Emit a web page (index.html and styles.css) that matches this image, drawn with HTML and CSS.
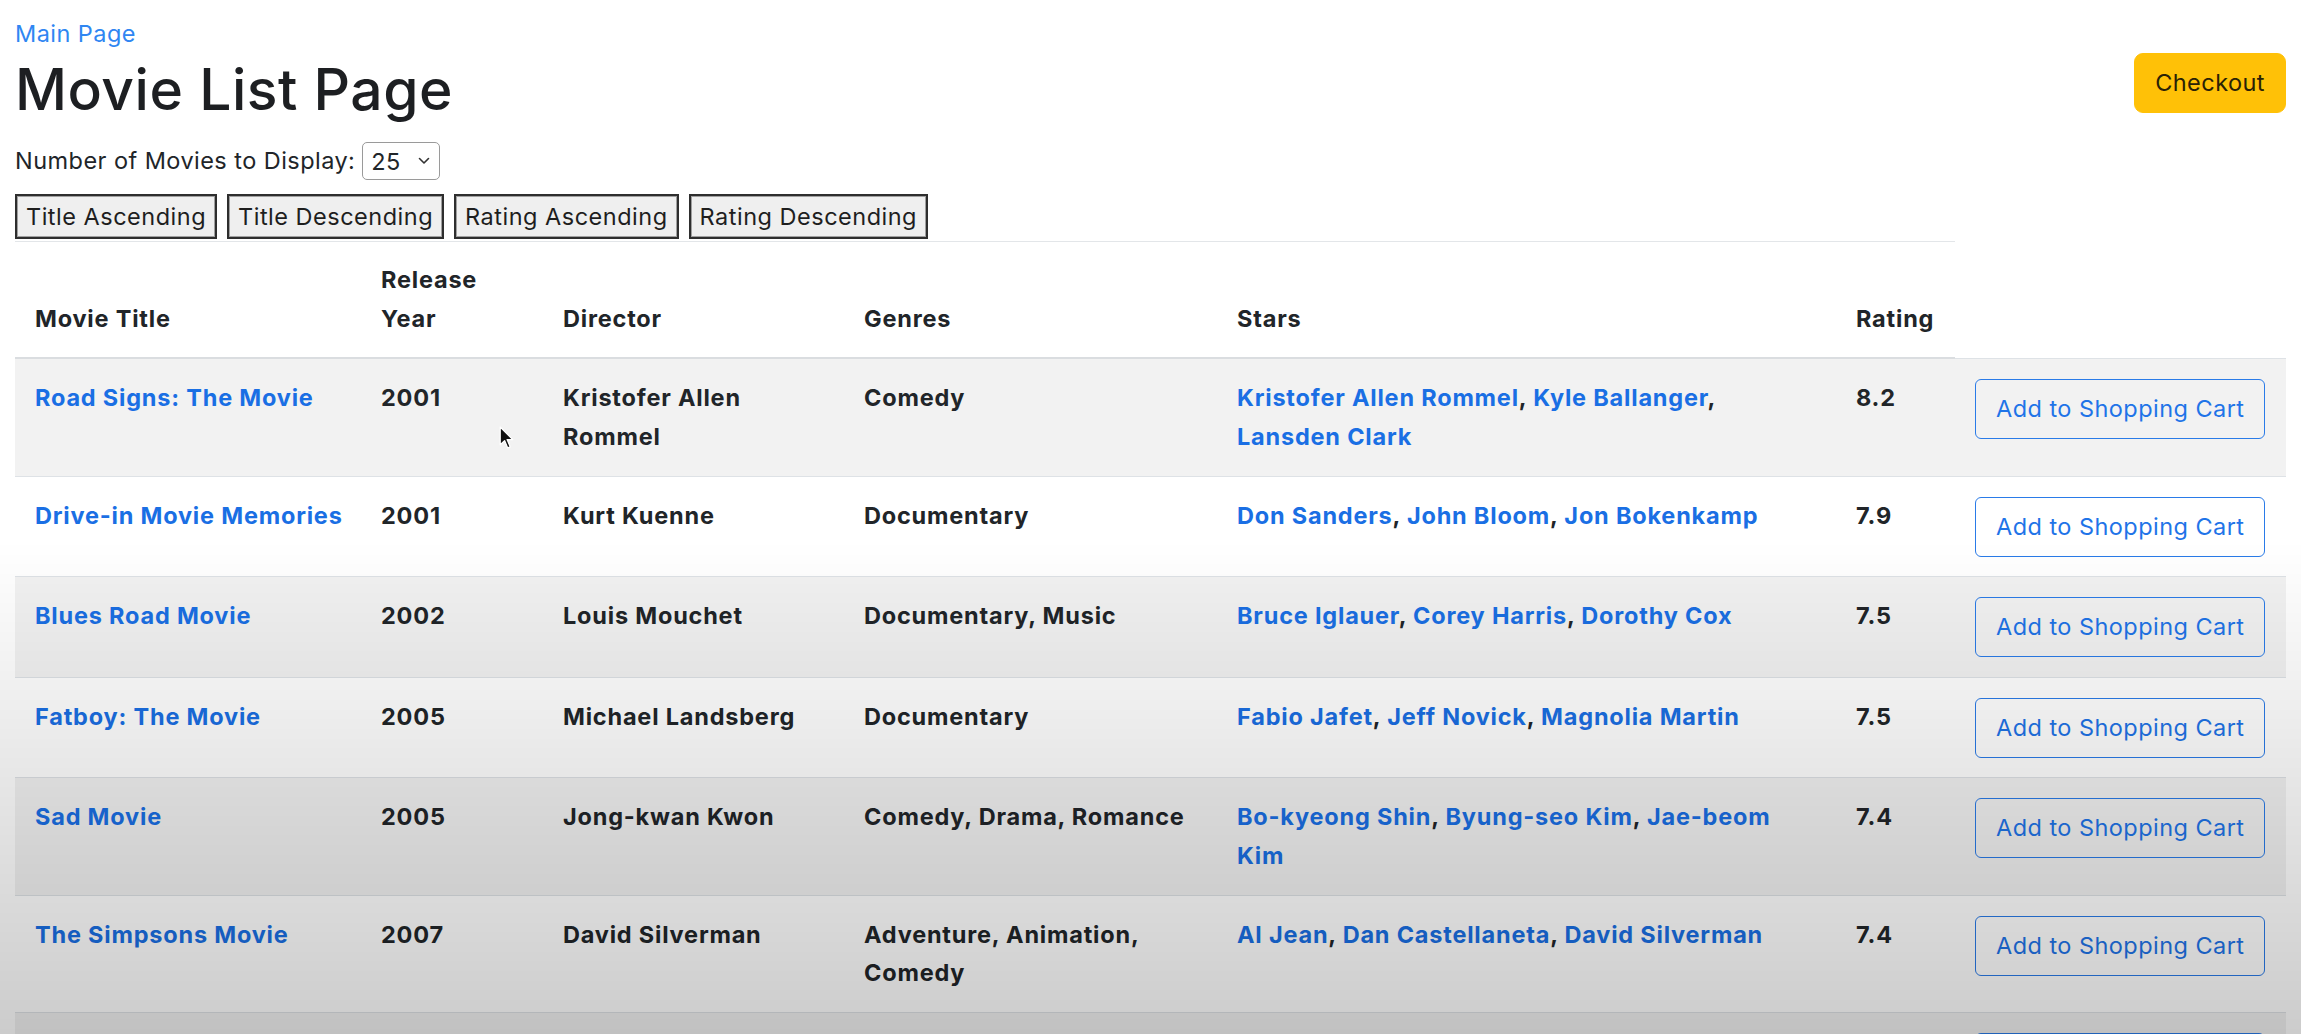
FILE: index.html
```html
<!DOCTYPE html>
<html lang="en">
<head>
<meta charset="utf-8">
<title>Movie List Page</title>
<link rel="stylesheet" href="styles.css">
</head>
<body>
<div class="page">
  <header class="top">
    <div class="top-left">
      <a class="main-link" href="#">Main Page</a>
      <h1 class="title">Movie List Page</h1>
      <div class="display-row">
        <label class="display-label" for="count">Number of Movies to Display:</label>
        <span class="select-wrap">
          <select id="count" class="count-select">
            <option>10</option>
            <option selected>25</option>
            <option>50</option>
            <option>100</option>
          </select>
          <svg class="select-chevron" width="12" height="8" viewBox="0 0 12 8"><path d="M1.5 1.5 L6 6 L10.5 1.5" fill="none" stroke="#333" stroke-width="1.6" stroke-linecap="round" stroke-linejoin="round"/></svg>
        </span>
      </div>
      <div class="sort-row">
        <button class="sort-btn">Title Ascending</button>
        <button class="sort-btn">Title Descending</button>
        <button class="sort-btn">Rating Ascending</button>
        <button class="sort-btn">Rating Descending</button>
      </div>
    </div>
    <button class="checkout-btn">Checkout</button>
  </header>

  <table class="movies">
    <colgroup>
      <col class="c-title"><col class="c-year"><col class="c-dir"><col class="c-genre"><col class="c-stars"><col class="c-rating"><col class="c-cart">
    </colgroup>
    <thead>
      <tr>
        <th>Movie Title</th>
        <th>Release Year</th>
        <th>Director</th>
        <th>Genres</th>
        <th>Stars</th>
        <th>Rating</th>
      </tr>
    </thead>
    <tbody>
      <tr>
        <td><a href="#">Road Signs: The Movie</a></td>
        <td>2001</td>
        <td>Kristofer Allen Rommel</td>
        <td>Comedy</td>
        <td><a href="#">Kristofer Allen Rommel</a>, <a href="#">Kyle Ballanger</a>, <a href="#">Lansden Clark</a></td>
        <td>8.2</td>
        <td><button class="cart-btn">Add to Shopping Cart</button></td>
      </tr>
      <tr>
        <td><a href="#">Drive-in Movie Memories</a></td>
        <td>2001</td>
        <td>Kurt Kuenne</td>
        <td>Documentary</td>
        <td><a href="#">Don Sanders</a>, <a href="#">John Bloom</a>, <a href="#">Jon Bokenkamp</a></td>
        <td>7.9</td>
        <td><button class="cart-btn">Add to Shopping Cart</button></td>
      </tr>
      <tr>
        <td><a href="#">Blues Road Movie</a></td>
        <td>2002</td>
        <td>Louis Mouchet</td>
        <td>Documentary, Music</td>
        <td><a href="#">Bruce Iglauer</a>, <a href="#">Corey Harris</a>, <a href="#">Dorothy Cox</a></td>
        <td>7.5</td>
        <td><button class="cart-btn">Add to Shopping Cart</button></td>
      </tr>
      <tr>
        <td><a href="#">Fatboy: The Movie</a></td>
        <td>2005</td>
        <td>Michael Landsberg</td>
        <td>Documentary</td>
        <td><a href="#">Fabio Jafet</a>, <a href="#">Jeff Novick</a>, <a href="#">Magnolia Martin</a></td>
        <td>7.5</td>
        <td><button class="cart-btn">Add to Shopping Cart</button></td>
      </tr>
      <tr>
        <td><a href="#">Sad Movie</a></td>
        <td>2005</td>
        <td>Jong-kwan Kwon</td>
        <td>Comedy, Drama, Romance</td>
        <td><a href="#">Bo-kyeong Shin</a>, <a href="#">Byung-seo Kim</a>, <a href="#">Jae-beom Kim</a></td>
        <td>7.4</td>
        <td><button class="cart-btn">Add to Shopping Cart</button></td>
      </tr>
      <tr>
        <td><a href="#">The Simpsons Movie</a></td>
        <td>2007</td>
        <td>David Silverman</td>
        <td>Adventure, Animation, Comedy</td>
        <td><a href="#">Al Jean</a>, <a href="#">Dan Castellaneta</a>, <a href="#">David Silverman</a></td>
        <td>7.4</td>
        <td><button class="cart-btn">Add to Shopping Cart</button></td>
      </tr>
      <tr>
        <td><a href="#">Bee Movie</a></td>
        <td>2007</td>
        <td>Simon J. Smith</td>
        <td>Comedy</td>
        <td><a href="#">Jerry Seinfeld</a></td>
        <td>6.1</td>
        <td><button class="cart-btn">Add to Shopping Cart</button></td>
      </tr>
    </tbody>
  </table>
</div>

<svg class="cursor" width="17" height="25" viewBox="0 0 16 24"><path d="M1 1 L1 18 L5.2 14 L8.2 21 L10.6 20 L7.6 13 L13 13 Z" fill="#111" stroke="#fff" stroke-width="1.2" stroke-linejoin="round"/></svg>
<div class="vignette"></div>
</body>
</html>
```

FILE: styles.css
```css
html, body {
  margin: 0;
  padding: 0;
  overflow: hidden;
  background: #fff;
}

body {
  font-family: "Inter", "Noto Sans", "Liberation Sans", sans-serif;
  font-size: 23.5px;
  line-height: 35px;
  letter-spacing: 0.45px;
  color: #212529;
  position: relative;
  min-height: 1034px;
}

.page {
  padding: 16px 15px 0 15px;
}

.top {
  display: flex;
  justify-content: space-between;
  align-items: flex-start;
}

.top-left {
  display: flex;
  flex-direction: column;
  align-items: flex-start;
}

.main-link {
  color: #2f86f2;
  text-decoration: none;
  line-height: 35px;
}

.title {
  margin: 5px 0 18px 0;
  font-size: 57px;
  line-height: 68px;
  font-weight: 500;
  letter-spacing: 0.5px;
  color: #1d1f22;
}

.display-row {
  display: flex;
  align-items: center;
  gap: 7px;
  height: 38px;
}

.display-label {
  line-height: 38px;
}

.select-wrap {
  position: relative;
  display: inline-block;
}

.count-select {
  appearance: none;
  -webkit-appearance: none;
  width: 78px;
  height: 38px;
  padding: 0 0 0 8px;
  border: 1px solid #9a9a9a;
  border-radius: 5px;
  background: #fff;
  font-family: inherit;
  font-size: 23.5px;
  letter-spacing: 0.45px;
  color: #212529;
  display: block;
}

.select-chevron {
  position: absolute;
  right: 10px;
  top: 15px;
  pointer-events: none;
}

.sort-row {
  display: flex;
  gap: 10px;
  margin-top: 14px;
}

.sort-btn {
  font-family: inherit;
  font-size: 23.5px;
  letter-spacing: 0.5px;
  line-height: 37px;
  padding: 2px 9px;
  background: #efefef;
  color: #1e1e1e;
  border: 2px solid #2e2e2e;
  box-shadow: inset 0 0 0 1px #a0a0a0;
  border-radius: 0;
}

.checkout-btn {
  margin-top: 37px;
  font-family: inherit;
  font-size: 23.5px;
  letter-spacing: 0.45px;
  line-height: 38px;
  padding: 10px 20px;
  background: #ffc107;
  border: 1px solid #ffc107;
  border-radius: 9px;
  color: #2a2206;
}

.movies {
  margin-top: 2px;
  width: 100%;
  table-layout: fixed;
  border-collapse: collapse;
  font-weight: 700;
  letter-spacing: 0.8px;
}

.c-title { width: 346px; }
.c-year { width: 182px; }
.c-dir { width: 301px; }
.c-genre { width: 373px; }
.c-stars { width: 619px; }
.c-rating { width: 119px; }
.c-cart { width: 331px; }

.movies th {
  text-align: left;
  vertical-align: bottom;
  font-weight: 700;
  line-height: 38.5px;
  padding: 19px 18px 19px 20px;
  border-top: 1px solid #e3e6e9;
  border-bottom: 2px solid #dadde0;
}

.movies td {
  vertical-align: top;
  line-height: 38.5px;
  padding: 20px 18px 19.5px 20px;
  border-top: 1px solid #dee2e6;
}

.movies tbody tr:nth-of-type(odd) {
  background-color: rgba(0, 0, 0, 0.05);
}

.movies a {
  color: #1a6fe4;
  text-decoration: none;
}

.cart-btn {
  font-family: inherit;
  font-size: 23.5px;
  font-weight: 400;
  letter-spacing: 0.45px;
  line-height: 38px;
  padding: 10px 20px;
  background: transparent;
  color: #1f74e8;
  border: 1px solid #2a7be8;
  border-radius: 6px;
  display: block;
}

.cursor {
  position: absolute;
  left: 499px;
  top: 426px;
}

.vignette {
  position: fixed;
  left: 0;
  top: 0;
  width: 100%;
  height: 100%;
  pointer-events: none;
  background: linear-gradient(to bottom, rgba(0, 0, 0, 0) 0px, rgba(0, 0, 0, 0) 540px, rgba(0, 0, 0, 0.2) 1034px);
}
```
